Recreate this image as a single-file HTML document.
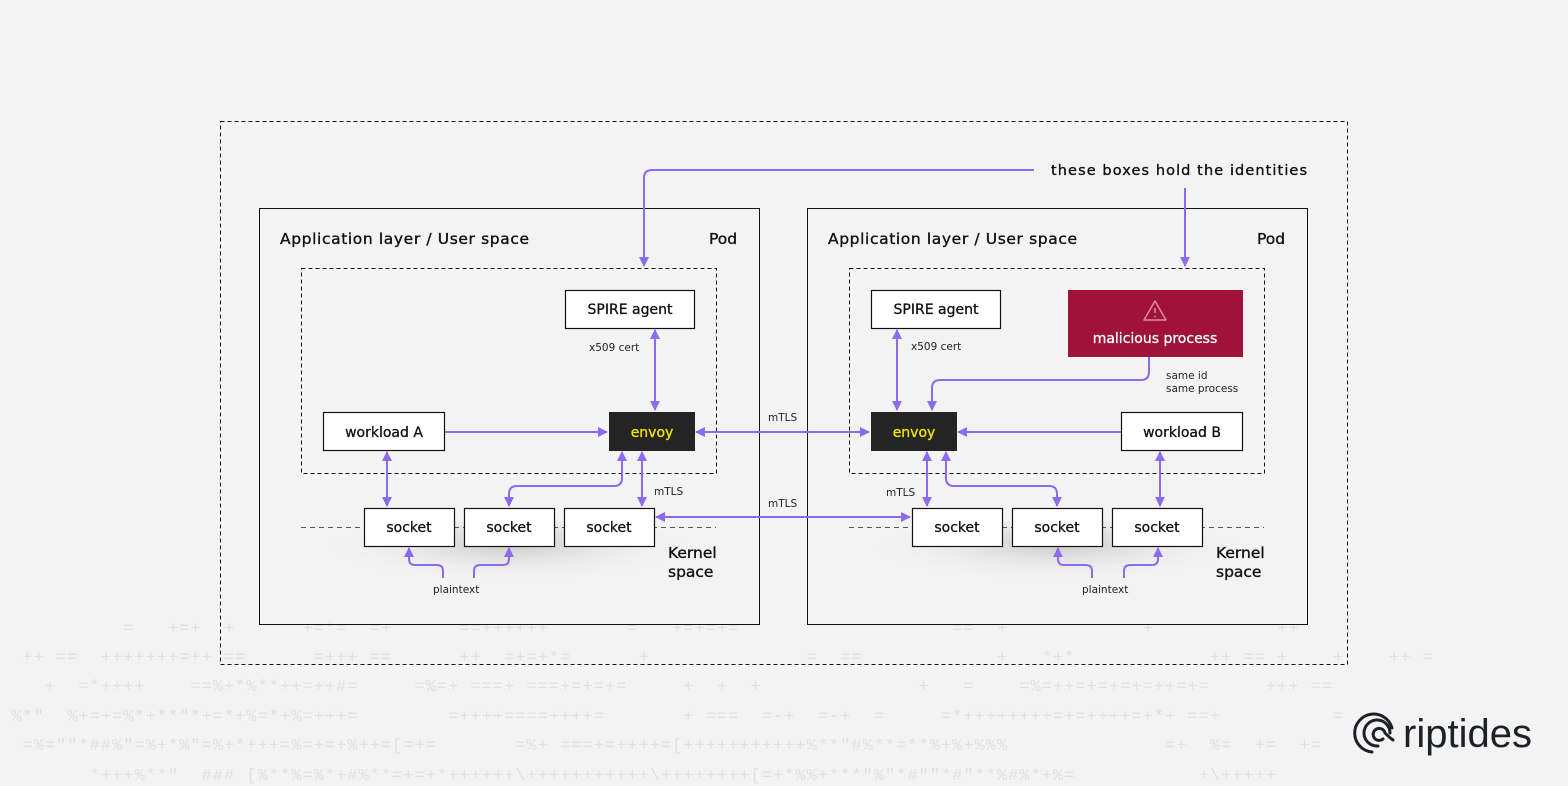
<!DOCTYPE html>
<html><head><meta charset="utf-8"><style>
html,body{margin:0;padding:0;background:#f3f3f3;}
body{width:1568px;height:784px;overflow:hidden;position:relative;font-family:"DejaVu Sans",sans-serif;}
.noise{position:absolute;left:0;font-family:"Liberation Mono",monospace;font-size:17px;color:#e0e0e0;white-space:pre;letter-spacing:1px;}
svg{position:absolute;left:0;top:0;}
</style></head><body>
<div class="noise" style="top:620px">           =   +=+  +      +=*=  =+      ==++++++       =   +=+=+=                   ==  +            +           ++</div>
<div class="noise" style="top:649px">  ++ ==  +++++++=++ ==      =+++ ==      ++  =+=+*=      +              =  ==            +   *+*            ++ == +    +    ++ =</div>
<div class="noise" style="top:678px">    +  =*++++    ==%+*%**++=++#=     =%=+ ===+ ===+=+=+=     +  +  +              +   =    =%=++=+=+=+=++=+=     +++ ==</div>
<div class="noise" style="top:708px"> %*"  %+=+=%*+**"*+=*+%=*+%=+++=        =++++====++++=       + ===  =-+  =-+  =     =*++++++++=+=++++=+*+ ==+          =</div>
<div class="noise" style="top:737px">  =%=""*##%"=%+*%"=%+*+++=%=+=+%++=[=+=       =%+ ===+=++++=[+++++++++++%**"#%**=**%+%+%%%              =+  %=  +=  +=</div>
<div class="noise" style="top:767px">        *+++%**"  ### [%**%=%*+#%**=+=+*++++++\+++++++++++\++++++++[=+*%%+***"%"*#""*#"**%#%*+%=           +\+++++</div>
<svg width="1568" height="784" viewBox="0 0 1568 784" xmlns="http://www.w3.org/2000/svg" font-family="DejaVu Sans, sans-serif">
<defs>
<marker id="a" markerWidth="10" markerHeight="10" refX="9" refY="5" orient="auto-start-reverse" markerUnits="userSpaceOnUse"><path d="M0,0 L10,5 L0,10 z" fill="#8b6cf0"/></marker>
<radialGradient id="sh" cx="0.5" cy="0.3" r="0.5"><stop offset="0" stop-color="#c9c9c9"/><stop offset="1" stop-color="#f3f3f3" stop-opacity="0"/></radialGradient>
</defs>
<rect x="220.5" y="121.5" width="1127" height="543" fill="none" stroke="#111" stroke-dasharray="4,3"/>
<rect x="259.5" y="208.5" width="500" height="416" fill="#f3f3f3" fill-opacity="0.6" stroke="#111"/>
<rect x="807.5" y="208.5" width="500" height="416" fill="#f3f3f3" fill-opacity="0.6" stroke="#111"/>
<rect x="301.5" y="268.5" width="415" height="205" fill="none" stroke="#111" stroke-dasharray="4,3"/>
<rect x="849.5" y="268.5" width="415" height="205" fill="none" stroke="#111" stroke-dasharray="4,3"/>
<ellipse cx="509" cy="560" rx="200" ry="40" fill="url(#sh)"/>
<ellipse cx="1057" cy="560" rx="200" ry="40" fill="url(#sh)"/>
<line x1="301" y1="527.5" x2="716" y2="527.5" stroke="#555" stroke-dasharray="5,4"/>
<line x1="849" y1="527.5" x2="1264" y2="527.5" stroke="#555" stroke-dasharray="5,4"/>
<g font-size="15.5" fill="#111" stroke="#111" stroke-width="0.35">
<text x="280" y="244" textLength="249">Application layer / User space</text><text x="709" y="244">Pod</text>
<text x="828" y="244" textLength="249">Application layer / User space</text><text x="1257" y="244">Pod</text>
<text x="1051" y="175" font-size="14.5" textLength="256">these boxes hold the identities</text>
<text x="668" y="558">Kernel</text><text x="668" y="577">space</text>
<text x="1216" y="558">Kernel</text><text x="1216" y="577">space</text>
</g>
<g fill="none" stroke="#8b6cf0" stroke-width="2">
<path d="M1034,170 H652 Q644,170 644,178 V266" marker-end="url(#a)"/>
<path d="M1185,188 V266" marker-end="url(#a)"/>
<path d="M444,432 H607" marker-end="url(#a)"/>
<path d="M655,330 V410" marker-start="url(#a)" marker-end="url(#a)"/>
<path d="M387,452 V506" marker-start="url(#a)" marker-end="url(#a)"/>
<path d="M622,452 V478 Q622,486 614,486 H517 Q509,486 509,494 V506" marker-start="url(#a)" marker-end="url(#a)"/>
<path d="M642,452 V506" marker-start="url(#a)" marker-end="url(#a)"/>
<path d="M696,432 H869" marker-start="url(#a)" marker-end="url(#a)"/>
<path d="M656,517 H910" marker-start="url(#a)" marker-end="url(#a)"/>
<path d="M443,578 V571 Q443,565 437,565 H415 Q409,565 409,559 V548" marker-end="url(#a)"/>
<path d="M474,578 V571 Q474,565 480,565 H503 Q509,565 509,559 V548" marker-end="url(#a)"/>
<path d="M897,330 V410" marker-start="url(#a)" marker-end="url(#a)"/>
<path d="M1149,357 V372 Q1149,380 1141,380 H940 Q932,380 932,388 V410" marker-end="url(#a)"/>
<path d="M1121,432 H958" marker-end="url(#a)"/>
<path d="M927,452 V506" marker-start="url(#a)" marker-end="url(#a)"/>
<path d="M946,452 V478 Q946,486 954,486 H1049 Q1057,486 1057,494 V506" marker-start="url(#a)" marker-end="url(#a)"/>
<path d="M1160,452 V506" marker-start="url(#a)" marker-end="url(#a)"/>
<path d="M1092,578 V571 Q1092,565 1086,565 H1064 Q1058,565 1058,559 V548" marker-end="url(#a)"/>
<path d="M1124,578 V571 Q1124,565 1130,565 H1152 Q1158,565 1158,559 V548" marker-end="url(#a)"/>
</g>
<g fill="#111" stroke="#111" stroke-width="1.2">
<rect x="565.5" y="290.5" width="129" height="38" fill="#fff"/>
<rect x="323.5" y="412.5" width="121" height="38" fill="#fff"/>
<rect x="609" y="412" width="86" height="39" fill="#242424" stroke="none"/>
<rect x="364.5" y="508.5" width="90" height="38" fill="#fff"/>
<rect x="464.5" y="508.5" width="90" height="38" fill="#fff"/>
<rect x="564.5" y="508.5" width="90" height="38" fill="#fff"/>
<rect x="871.5" y="290.5" width="129" height="38" fill="#fff"/>
<rect x="1068" y="290" width="175" height="67" fill="#a01239" stroke="none"/>
<rect x="871" y="412" width="86" height="39" fill="#242424" stroke="none"/>
<rect x="1121.5" y="412.5" width="121" height="38" fill="#fff"/>
<rect x="912.5" y="508.5" width="90" height="38" fill="#fff"/>
<rect x="1012.5" y="508.5" width="90" height="38" fill="#fff"/>
<rect x="1112.5" y="508.5" width="90" height="38" fill="#fff"/>
</g>
<g font-size="14" text-anchor="middle" fill="#111" stroke-width="0.3" stroke="#111">
<text x="630" y="314">SPIRE agent</text>
<text x="384" y="437">workload A</text>
<text x="652" y="437" fill="#f2e600" stroke="#f2e600">envoy</text>
<text x="409" y="532">socket</text><text x="509" y="532">socket</text><text x="609" y="532">socket</text>
<text x="936" y="314">SPIRE agent</text>
<text x="914" y="437" fill="#f2e600" stroke="#f2e600">envoy</text>
<text x="1182" y="437">workload B</text>
<text x="957" y="532">socket</text><text x="1057" y="532">socket</text><text x="1157" y="532">socket</text>
<text x="1155" y="343" fill="#fff" stroke="#fff">malicious process</text>
</g>
<g fill="none" stroke="#e08aa6" stroke-width="1.5" stroke-linejoin="round"><path d="M1155,301 L1144,320 H1166 Z"/><path d="M1155,308 V313"/></g>
<circle cx="1155" cy="316.5" r="0.9" fill="#e08aa6"/>
<g font-size="10.5" fill="#222">
<text x="589" y="351">x509 cert</text>
<text x="911" y="350">x509 cert</text>
<text x="654" y="495">mTLS</text>
<text x="886" y="496">mTLS</text>
<text x="768" y="421">mTLS</text>
<text x="768" y="507">mTLS</text>
<text x="433" y="593">plaintext</text>
<text x="1082" y="593">plaintext</text>
<text x="1166" y="379">same id</text>
<text x="1166" y="392">same process</text>
</g>
<g fill="none" stroke="#1e2028" stroke-width="3" stroke-linecap="round">
<path d="M1372,752 A19,19 0 1 1 1392,728"/>
<path d="M1378,746 A13,13 0 1 1 1390,733"/>
<path d="M1383,739 A6,6 0 1 1 1385,733 Q1390,738 1393,740"/>
</g>
<text x="1403" y="747" font-size="40" fill="#1e2028" font-family="Liberation Sans,sans-serif" textLength="129">riptides</text>
</svg>
</body></html>
